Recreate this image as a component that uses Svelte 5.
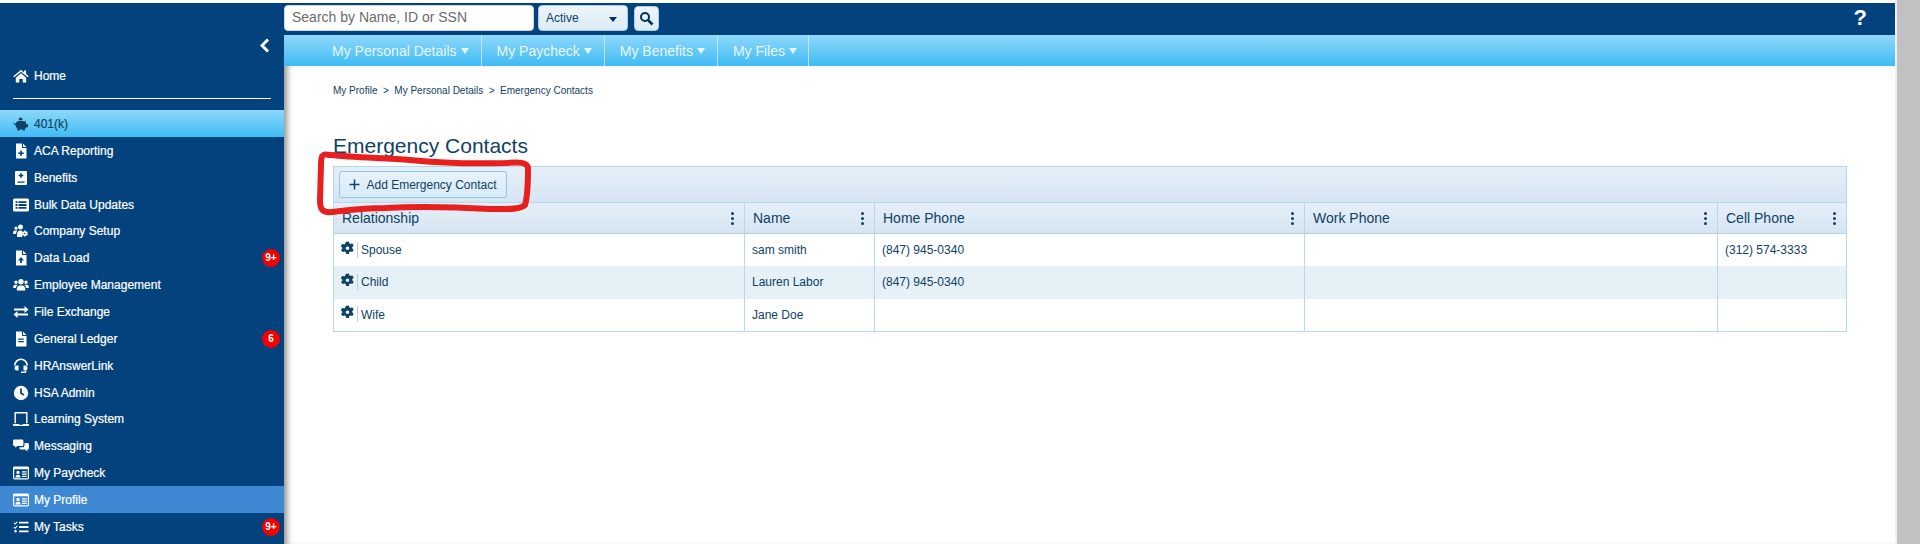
<script>
	const icons = {
		home: 'M8 1.800.3 8.200l1 1.100L8 3.700l6.700 5.600 1-1.100-2.600-2.200V2.500h-2v2zM2.800 9.700 8 5.300l5.200 4.400V14.500H9.700v-3.500H6.300v3.500H2.800z',
		piggy: 'M6 4.400a1.900 1.900 0 1 1 3.400-.2C8.300 4 7 4 6 4.400zM1 6.500c0 .8.6 1.300 1.500 1.400C2.800 6 5 4.800 7.800 4.800c1.400 0 2.300.2 3.200.7l1.700-.8v2.100c.5.400.8.900 1 1.400H15v3h-1.500c-.4.6-.9 1.100-1.500 1.500v1.800H9.800v-1.100H6.500v1.100H4.300v-2C3.300 11.600 2.600 10.400 2.500 9 1.300 8.900.3 7.900.5 6.500z',
		filePlus: 'M3 .5h6v4.500h4.500V15.500H3zM10 .5l3.500 3.500H10zM7.200 7.500h1.600v2h2v1.600h-2v2H7.200v-2h-2V9.500h2z',
		benefits: 'M3 1h10a1 1 0 0 1 1 1v12a1 1 0 0 1-1 1H3a1 1 0 0 1-1-1V2a1 1 0 0 1 1-1zM7.200 3.200v1.500H5.700v1.500h1.500v1.500h1.600V6.200h1.500V4.700H8.800V3.200zM4.500 11.400v1.300h7v-1.300z',
		list: 'M1.500 1.500h13A1.500 1.500 0 0 1 16 3v10a1.500 1.500 0 0 1-1.500 1.500h-13A1.500 1.500 0 0 1 0 13V3a1.500 1.500 0 0 1 1.500-1.500zM2.500 4.200v1.800h2V4.200zM5.500 4.200v1.800h8V4.200zM2.500 7.100v1.800h2V7.100zM5.500 7.100v1.800h8V7.100zM2.500 10v1.800h2V10zM5.500 10v1.800h8V10z',
		usersCog: 'M3 6.800a1.600 1.600 0 1 1 0-3.200 1.600 1.600 0 0 1 0 3.200zM7.500 6.500a2.500 2.500 0 1 1 0-5 2.500 2.500 0 0 1 0 5zM.1 11V9.500c0-1.200.8-2 2-2h1.600c.3 0 .6.100.8.300-.9.700-1.400 1.800-1.500 3.200zM4 14v-2.200C4 9.500 5.200 7.600 7.500 7.600c.6 0 1.200.1 1.700.4-.5 1.500-.2 4 .2 6zM12.500 7.500l.4 1.200 1.200-.3.800 1.100-.8 1 .8 1-.8 1.100-1.200-.3-.4 1.200h-1.400l-.4-1.200-1.200.3-.7-1.100.8-1-.8-1 .7-1.100 1.200.3.400-1.200zM11.800 9.800a.7.7 0 1 0 0 1.500.7.7 0 0 0 0-1.500z',
		fileUp: 'M3 .5h6v4.500h4.500V15.500H3zM10 .5l3.500 3.500H10zM8 7 5 10.400h2.100V13h1.800v-2.600H11z',
		users: 'M3 7a1.700 1.700 0 1 1 0-3.400A1.700 1.700 0 0 1 3 7zM13 7a1.700 1.700 0 1 1 0-3.400A1.700 1.700 0 0 1 13 7zM8 7.500a2.700 2.700 0 1 1 0-5.400 2.700 2.700 0 0 1 0 5.400zM.2 11V9.700c0-1.200.8-2 2-2h1.500c.3 0 .6.100.9.300-1 .6-1.500 1.600-1.700 3zM15.800 11V9.700c0-1.200-.8-2-2-2h-1.500c-.3 0-.6.100-.9.300 1 .6 1.500 1.600 1.700 3zM3.800 13.500v-1.900c0-1.900 1.300-3.200 3-3.200h2.400c1.700 0 3 1.300 3 3.200v1.900z',
		exchange: 'M1 4.400h10.500V2L15.500 5.500l-4 3.500V6.600H1zM15 11.600H4.500V14L.5 10.500l4-3.500v2.400H15z',
		file: 'M3 .5h6v4.500h4.500V15.500H3zM10 .5l3.500 3.500H10zM5.200 7.500v1.300h5.600V7.500zM5.200 10v1.300h5.600V10z',
		headset: 'M1 7.500a7 7 0 0 1 14 0h-1.600a5.400 5.400 0 0 0-10.800 0zM4 7.500h1.500v5H4a2.500 2.500 0 0 1 0-5zM12 7.500h-1.500v5H12a2.500 2.500 0 0 0 0-5zM13.500 12.800v.4a1.700 1.700 0 0 1-1.700 1.700H8v-1.300h3.800a.4.4 0 0 0 .4-.4v-.4z',
		clock: 'M8 .8a7.200 7.200 0 1 1 0 14.400A7.200 7.200 0 0 1 8 .8zM7.100 3.500V8.400l3.300 2.400 1-1.400-2.500-1.800V3.500z',
		laptop: 'M1.500 1h13v11.200H13.100V2.400H2.900v9.800H1.500zM0 13h5.800l.5.700h3.400l.5-.7H16v1c0 .6-.5 1-1 1H1c-.6 0-1-.4-1-1z',
		comments: 'M1.500 1.500h7.500c.8 0 1.400.6 1.400 1.400v3.800c0 .8-.6 1.400-1.400 1.400H4.500L1.800 9.800l.5-1.700h-.8C.7 8.100.1 7.500.1 6.700V2.900c0-.8.6-1.400 1.400-1.400zM11.500 5h3.100c.7 0 1.300.6 1.300 1.300v4c0 .7-.6 1.300-1.300 1.300h-.4l.4 2-2.500-2H7.800c-.7 0-1.300-.6-1.300-1.300V9.300h3.200c1 0 1.800-.8 1.800-1.800z',
		idCard: 'M1.400 1.500h13.200c.8 0 1.400.6 1.400 1.400v10.200c0 .8-.6 1.400-1.400 1.400H1.400C.6 14.500 0 13.900 0 13.100V2.900c0-.8.6-1.400 1.400-1.400zM1.200 4.300v9h13.600v-9zM5 5.700a1.700 1.700 0 1 0 0 3.400 1.700 1.700 0 0 0 0-3.400zM2.400 12.400c0-1.500 1.100-2.600 2.600-2.600s2.600 1.100 2.600 2.600zM9 6.300v1.300h4.700V6.300zM9 8.500v1.300h4.700V8.500zM9 10.700V12h4.700v-1.300z',
		tasks: 'M6 2.800h9.500v1.800H6zM6 7.100h9.500v1.800H6zM6 11.400h9.500v1.800H6zM1.200 3.400l.9.900L4 2.300l.7.700-2.600 2.700L.5 4.100zM1.200 7.700l.9.900L4 6.600l.7.700-2.600 2.700L.5 8.400zM2.500 11a1.300 1.300 0 1 1 0 2.600 1.300 1.300 0 0 1 0-2.600z'
	};

	const menu = [
		{ label: '401(k)', icon: 'piggy', tone: 'sky' },
		{ label: 'ACA Reporting', icon: 'filePlus' },
		{ label: 'Benefits', icon: 'benefits' },
		{ label: 'Bulk Data Updates', icon: 'list' },
		{ label: 'Company Setup', icon: 'usersCog' },
		{ label: 'Data Load', icon: 'fileUp', badge: '9+' },
		{ label: 'Employee Management', icon: 'users' },
		{ label: 'File Exchange', icon: 'exchange' },
		{ label: 'General Ledger', icon: 'file', badge: '6' },
		{ label: 'HRAnswerLink', icon: 'headset' },
		{ label: 'HSA Admin', icon: 'clock' },
		{ label: 'Learning System', icon: 'laptop' },
		{ label: 'Messaging', icon: 'comments' },
		{ label: 'My Paycheck', icon: 'idCard' },
		{ label: 'My Profile', icon: 'idCard', tone: 'current' },
		{ label: 'My Tasks', icon: 'tasks', badge: '9+' }
	];

	const tabs = ['My Personal Details', 'My Paycheck', 'My Benefits', 'My Files'];

	const columns = ['Relationship', 'Name', 'Home Phone', 'Work Phone', 'Cell Phone'];

	const rows = [
		['Spouse', 'sam smith', '(847) 945-0340', '', '(312) 574-3333'],
		['Child', 'Lauren Labor', '(847) 945-0340', '', ''],
		['Wife', 'Jane Doe', '', '', '']
	];
</script>

<style>
:global(body) {
	margin: 0;
	background: #fff;
}

.page {
	display: flex;
	height: 544px;
	overflow: hidden;
	font-family: "Liberation Sans", Arial, sans-serif;
	color: #0f4264;
}

.window {
	flex: 1;
	min-width: 0;
	padding-top: 3px;
	display: flex;
	flex-direction: column;
}

.scrollbar {
	width: 25px;
	background: #f1f1f1;
	padding-left: 2px;
	box-sizing: border-box;
}

.scrollbar div {
	height: 100%;
	background: #c1c1c1;
}

.shell {
	flex: 1;
	display: flex;
	min-height: 0;
}

aside {
	width: 284px;
	flex: none;
	background: #03427c;
	color: #fff;
	font-size: 12px;
	-webkit-text-stroke: 0.2px;
}

.collapse {
	height: 63px;
	display: flex;
	justify-content: flex-end;
	align-items: flex-start;
	padding: 35px 14px 0 0;
	box-sizing: border-box;
}

.collapse svg {
	display: block;
}

.home {
	height: 33px;
	margin: 0 13px;
	padding-top: 1px;
	border-bottom: 1px solid #fff;
	display: flex;
	align-items: flex-start;
	gap: 5px;
	box-sizing: border-box;
}

.home svg {
	margin-top: 1px;
}

.home span {
	line-height: 18px;
}

ul {
	list-style: none;
	margin: 11px 0 0;
	padding: 0;
}

li {
	height: 26.86px;
	padding: 1px 4px 0 13px;
	display: flex;
	align-items: center;
	gap: 5px;
	box-sizing: border-box;
}

li.sky {
	background: linear-gradient(#8ed8fa, #3fbbf4);
	color: #0f4264;
}

li.current {
	background: #3d87d3;
}

.icon {
	width: 16px;
	height: 16px;
	flex: none;
	fill: currentColor;
}

.badge {
	margin-left: auto;
	width: 18px;
	height: 18px;
	border-radius: 50%;
	background: #f50000;
	font-size: 10px;
	font-weight: bold;
	line-height: 18px;
	text-align: center;
	-webkit-text-stroke: 0;
}

.right {
	flex: 1;
	min-width: 0;
	display: flex;
	flex-direction: column;
}

.topbar {
	height: 32px;
	flex: none;
	background: #03427c;
	display: flex;
	align-items: flex-start;
	padding-top: 2px;
	box-sizing: border-box;
}

.search {
	width: 250px;
	height: 26px;
	border: 1px solid #c9dcea;
	border-radius: 4px;
	background: #fff;
	padding-left: 7px;
	font-size: 14px;
	line-height: 22px;
	color: #6b6b6b;
	box-sizing: border-box;
}

.status {
	width: 90px;
	height: 26px;
	margin-left: 4px;
	border: 1px solid #a9cfe6;
	border-radius: 4px;
	background: linear-gradient(#edf5fb, #dcebf6);
	padding: 0 10px 0 7px;
	font-size: 12px;
	line-height: 22px;
	color: #0f4264;
	display: flex;
	justify-content: space-between;
	align-items: center;
	box-sizing: border-box;
}

.status i {
	width: 0;
	height: 0;
	margin-top: 3px;
	border: 4px solid transparent;
	border-top: 5px solid #03325c;
	border-bottom: 0;
}

.go {
	width: 25px;
	height: 25px;
	margin: 1px 0 0 6px;
	border: 1px solid #a9cfe6;
	border-radius: 4px;
	background: linear-gradient(#edf5fb, #dcebf6);
	display: flex;
	align-items: center;
	justify-content: center;
	box-sizing: border-box;
}

.help {
	margin-left: auto;
	margin-right: 28px;
	margin-top: 1px;
	font-size: 22px;
	font-weight: bold;
	line-height: 24px;
	color: #fff;
}

nav {
	height: 31px;
	flex: none;
	background: linear-gradient(#8ed8fa, #3fbbf4);
	display: flex;
	padding-left: 33px;
	font-size: 14px;
	line-height: 30px;
	color: #e9f6fd;
}

nav div {
	padding: 0 12px 0 15px;
	border-right: 1px solid #bfe6f8;
	display: flex;
	align-items: center;
	gap: 4px;
}

nav div:last-child {
	padding-right: 11px;
}

nav i {
	width: 0;
	height: 0;
	margin-top: 1px;
	border: 4.5px solid transparent;
	border-top: 6px solid #e9f6fd;
	border-bottom: 0;
}

main {
	flex: 1;
	padding: 19px 48px 0 49px;
	box-shadow: inset 7px 0 6px -4px #8f8f8f;
}

.crumbs {
	font-size: 10px;
	line-height: 12px;
	display: flex;
	gap: 5.5px;
}

h1 {
	margin: 36px 0 7px;
	font-size: 21px;
	font-weight: normal;
	line-height: 26px;
	color: #0f4264;
}

.grid {
	border: 1px solid #b3d9ec;
}

.toolbar {
	height: 36px;
	padding: 4px 0 0 5px;
	background: linear-gradient(#e6eff8, #d6e5f3);
	border-bottom: 1px solid #b3d9ec;
	box-sizing: border-box;
}

.add {
	width: 168px;
	height: 27px;
	border: 1px solid #8ec9e3;
	border-radius: 3px;
	background: linear-gradient(#e6f2fa, #d8ebf6);
	color: #0f4264;
	font: 12px "Liberation Sans", Arial, sans-serif;
	display: flex;
	align-items: center;
	justify-content: center;
	gap: 6px;
	padding: 0;
	box-sizing: border-box;
}

.cols {
	display: grid;
	grid-template-columns: 411px 130px 430px 413px 1fr;
}

.head {
	height: 31px;
	background: linear-gradient(#e6eff8, #d6e5f3);
	border-bottom: 1px solid #a9d3e9;
	box-sizing: border-box;
	font-size: 14px;
}

.head div {
	display: flex;
	align-items: center;
	justify-content: space-between;
	padding: 0 10px 0 8px;
	border-right: 1px solid #b3d9ec;
	min-width: 0;
}

.head div:last-child,
.row div:last-child {
	border-right: 0;
}

.dots {
	display: grid;
	gap: 2px;
}

.dots b {
	width: 3px;
	height: 3px;
	border-radius: 50%;
	background: #0f4264;
}

.row {
	height: 32.33px;
	font-size: 12px;
}

.row:nth-child(even) {
	background: #e5f0f7;
}

.row div {
	display: flex;
	align-items: center;
	padding: 0 7px;
	border-right: 1px solid #b3d9ec;
	min-width: 0;
}

.row div:first-child {
	gap: 3px;
}

.gear {
	width: 15px;
	height: 15px;
	margin: -4px -1px 0 -1px;
	fill: #0f4264;
	flex: none;
}

.tick {
	width: 1px;
	height: 16px;
	margin-top: -1px;
	background: #b8cfdd;
}

.scribble {
	position: absolute;
	left: 0;
	top: 0;
	pointer-events: none;
}
</style>

<div class="page">
	<div class="window">
		<div class="shell">
			<aside>
				<div class="collapse">
					<svg width="10" height="15" viewBox="0 0 10 15"><path d="M8 1.500 2 7.500l6 6" fill="none" stroke="#fff" stroke-width="3"/></svg>
				</div>
				<div class="home">
					<svg class="icon" viewBox="0 0 16 16"><path d={icons.home} fill-rule="evenodd"/></svg>
					<span>Home</span>
				</div>
				<ul>
					{#each menu as item}
						<li class={item.tone}>
							<svg class="icon" viewBox="0 0 16 16"><path d={icons[item.icon]} fill-rule="evenodd"/></svg>
							<span>{item.label}</span>
							{#if item.badge}
								<span class="badge">{item.badge}</span>
							{/if}
						</li>
					{/each}
				</ul>
			</aside>
			<div class="right">
				<div class="topbar">
					<div class="search">Search by Name, ID or SSN</div>
					<div class="status"><span>Active</span><i></i></div>
					<div class="go">
						<svg width="15" height="15" viewBox="0 0 15 15"><circle cx="6" cy="6" r="4" fill="none" stroke="#03325c" stroke-width="2"/><path d="m9 9 4.500 4.500" stroke="#03325c" stroke-width="2.500"/></svg>
					</div>
					<div class="help">?</div>
				</div>
				<nav>
					{#each tabs as tab}
						<div>{tab}<i></i></div>
					{/each}
				</nav>
				<main>
					<div class="crumbs">
						<span>My Profile</span><span>&gt;</span><span>My Personal Details</span><span>&gt;</span><span>Emergency Contacts</span>
					</div>
					<h1>Emergency Contacts</h1>
					<div class="grid">
						<div class="toolbar">
							<button class="add">
								<svg width="11" height="11" viewBox="0 0 11 11"><path d="M5.500.500v10M.500 5.500h10" stroke="#0f4264" stroke-width="1.500"/></svg>
								Add Emergency Contact
							</button>
						</div>
						<div class="cols head">
							{#each columns as col}
								<div>{col}<span class="dots"><b></b><b></b><b></b></span></div>
							{/each}
						</div>
						<div>
							{#each rows as row}
								<div class="cols row">
									{#each row as cell, i}
										<div>
											{#if i === 0}
												<svg class="gear" viewBox="0 0 16 16"><path fill-rule="evenodd" d="m9.500.500.400 2 1.300.7 1.900-.7 1.500 2.600-1.500 1.300v1.500l1.500 1.300-1.500 2.600-1.900-.7-1.300.7-.4 2h-3l-.4-2-1.300-.7-1.900.7L.900 9.700l1.500-1.300V6.900L.900 5.600l1.500-2.600 1.900.7 1.300-.7.4-2zM8 5.800a1.900 1.900 0 1 0 0 3.800 1.900 1.900 0 0 0 0-3.800z"/></svg>
												<span class="tick"></span>
											{/if}
											{cell}
										</div>
									{/each}
								</div>
							{/each}
						</div>
					</div>
				</main>
			</div>
		</div>
	</div>
	<div class="scrollbar"><div></div></div>
	<svg class="scribble" width="600" height="230" viewBox="0 0 600 230">
		<path d="M329 155C322 153 321 156 321 165L320 200C320 209 322 213 332 212C350 210 365 208 385 208C420 206 455 207 490 209C505 209 520 210 525 205C528 195 528 180 528 168C527 162 520 162 505 163C470 164 440 163 410 160C380 158 350 157 331 155" fill="none" stroke="#e81f1f" stroke-width="6" stroke-linecap="round"/>
	</svg>
</div>
